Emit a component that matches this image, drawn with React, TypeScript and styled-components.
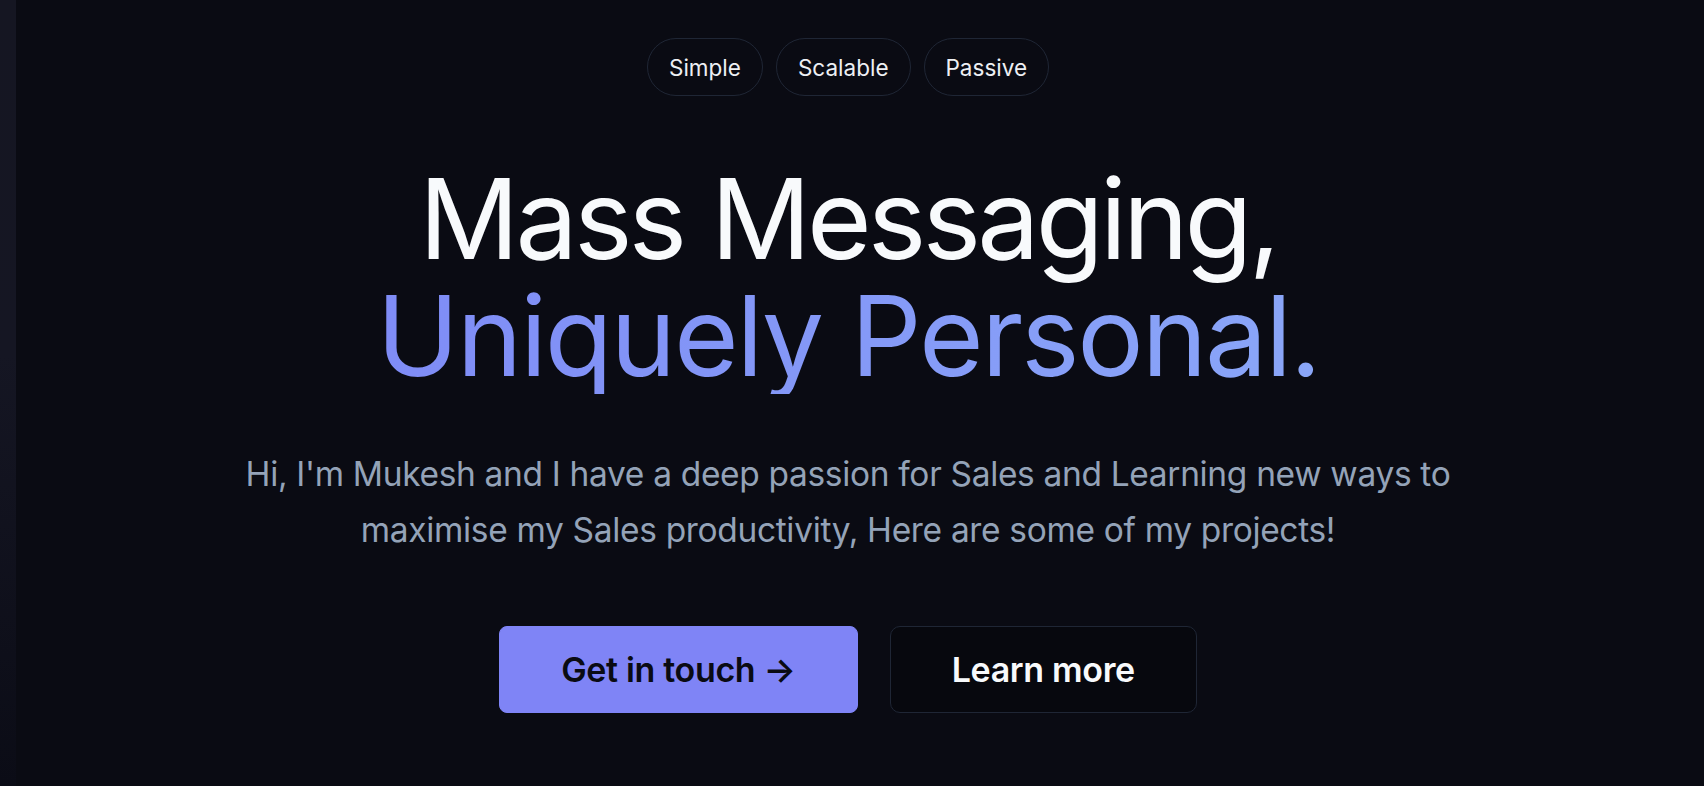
import React, { FC } from 'react';
import styled, { createGlobalStyle } from 'styled-components';

const color = {
  bg: '#0a0b13',
  white: '#f8fafc',
  muted: '#94a3b8',
  border: '#1f2635',
  primary: '#7f84f6',
};

const tags = ['Simple', 'Scalable', 'Passive'];

const GlobalStyle = createGlobalStyle`
  html, body {
    margin: 0;
    padding: 0;
    background: ${color.bg};
  }
  body {
    font-family: Inter, "Noto Sans", sans-serif;
    -webkit-font-smoothing: antialiased;
  }
`;

const App: FC = () => (
  <>
    <GlobalStyle />
    <Page>
      <Stripe />
      <Hero>
        <Tags>
          {tags.map(tag => (
            <Tag key={`tag-${tag}`}>{tag}</Tag>
          ))}
        </Tags>

        <Heading>
          <Line>Mass Messaging,</Line>
          <Accent>Uniquely Personal.</Accent>
        </Heading>

        <Intro>
          Hi, I'm Mukesh and I have a deep passion for Sales and Learning new ways to
          maximise my Sales productivity, Here are some of my projects!
        </Intro>

        <Actions>
          <Button primary>Get in touch →</Button>
          <Button>Learn more</Button>
        </Actions>
      </Hero>
    </Page>
  </>
);

export default App;

const Page = styled.div`
  display: flex;
  min-height: 786px;
  background: ${color.bg};
`;

const Stripe = styled.aside`
  width: 16px;
  flex-shrink: 0;
  background: linear-gradient(180deg, #151622 0%, #151623 45%, #0b0c16 100%);
`;

const Hero = styled.main`
  flex: 1;
  display: flex;
  flex-direction: column;
  align-items: center;
  padding: 38px 24px 0 0;
`;

const Tags = styled.div`
  display: flex;
  gap: 13px;
`;

const Tag = styled.span`
  display: inline-flex;
  align-items: center;
  height: 58px;
  box-sizing: border-box;
  padding: 0 21px;
  border: 1.5px solid ${color.border};
  border-radius: 999px;
  font-size: 22.5px;
  color: #eef0f4;
`;

const Heading = styled.h1`
  margin: 64px 0 0;
  font-size: 111px;
  line-height: 117px;
  font-weight: 400;
  letter-spacing: -0.035em;
  text-align: center;
  color: ${color.white};
`;

const Line = styled.span`
  display: block;
`;

const Accent = styled.span`
  display: block;
  letter-spacing: -0.02em;
  background: linear-gradient(90deg, #7f8cf6 0%, #8aa6f8 100%);
  -webkit-background-clip: text;
  background-clip: text;
  color: transparent;
`;

const Intro = styled.p`
  margin: 52px 0 0;
  max-width: 1240px;
  font-size: 33.5px;
  line-height: 56px;
  font-weight: 400;
  letter-spacing: -0.01em;
  text-align: center;
  color: ${color.muted};
`;

const Actions = styled.div`
  display: flex;
  gap: 32px;
  margin-top: 68px;
`;

const Button = styled.button<{ primary?: boolean }>`
  height: 87px;
  box-sizing: border-box;
  padding: 0 61px;
  border-radius: ${p => (p.primary ? '8px' : '10px')};
  border: 1.5px solid ${p => (p.primary ? color.primary : color.border)};
  background: ${p => (p.primary ? color.primary : '#07080e')};
  color: ${p => (p.primary ? '#0a0b13' : color.white)};
  font-family: Inter, "Noto Sans", sans-serif;
  font-size: 34px;
  font-weight: 600;
  letter-spacing: -0.01em;
  cursor: pointer;
`;
